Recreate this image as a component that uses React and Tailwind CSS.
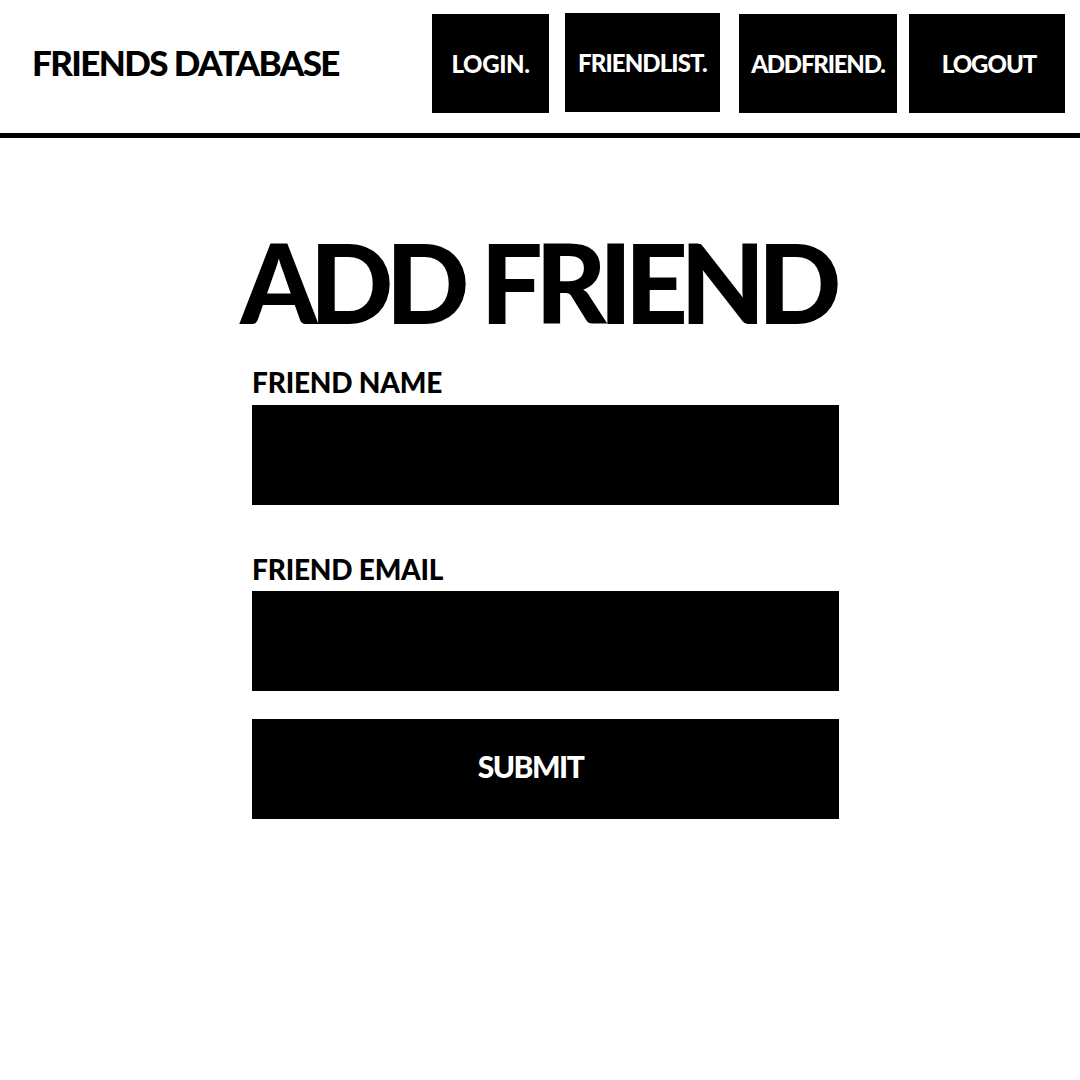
import { useState } from 'react';

const links = [
  { label: 'LOGIN.', cls: 'w-[117px] mt-[1px] tracking-[-0.4px]' },
  { label: 'FRIENDLIST.', cls: 'w-[155px] ml-[16px] tracking-[-0.9px]' },
  { label: 'ADDFRIEND.', cls: 'w-[158px] ml-[19px] mt-[1px] tracking-[-1.2px]' },
  { label: 'LOGOUT', cls: 'w-[156px] ml-[12px] mt-[1px] tracking-[-1px] pl-[4px]' },
];

export default function App() {
  const [name, setName] = useState('');
  const [email, setEmail] = useState('');

  return (
    <div className="min-h-[1080px] bg-white text-black font-['Lato',sans-serif]">
      {/* header */}
      <header className="flex items-start h-[138px] pt-[13px] border-b-[5px] border-black">
        <div className="h-[99px] flex items-center pl-[32px]">
          <h1 className="text-[35px] font-black leading-none tracking-[-1.6px]">FRIENDS DATABASE</h1>
        </div>
        <nav className="flex ml-auto pr-[15px]">
          {links.map((l, i) => (
            <a
              key={i}
              href="#"
              className={'h-[99px] bg-black text-white flex items-center justify-center text-[24px] font-black leading-none ' + l.cls}
            >
              {l.label}
            </a>
          ))}
        </nav>
      </header>

      <main className="flex flex-col">
        <h2 className="mt-[88px] text-center text-[110px] font-black leading-none tracking-[-7.6px] pr-[6px]">ADD FRIEND</h2>
        <form className="ml-[252px] w-[587px] mt-[32px] flex flex-col" onSubmit={e => e.preventDefault()}>
          <label className="text-[28px] font-black leading-none tracking-[-0.2px] mb-[9px]">FRIEND NAME</label>
          <input
            className="h-[100px] bg-black text-white px-4 text-2xl outline-none"
            value={name}
            onChange={e => setName(e.target.value)}
          />
          <label className="mt-[50px] text-[28px] font-black leading-none tracking-[-0.2px] mb-[8px]">FRIEND EMAIL</label>
          <input
            className="h-[100px] bg-black text-white px-4 text-2xl outline-none"
            value={email}
            onChange={e => setEmail(e.target.value)}
          />
          <button type="submit" className="mt-[28px] h-[100px] bg-black text-white text-[30px] font-black leading-none tracking-[-1.5px] pr-[30px] pb-[6px]">
            SUBMIT
          </button>
        </form>
      </main>
    </div>
  );
}
